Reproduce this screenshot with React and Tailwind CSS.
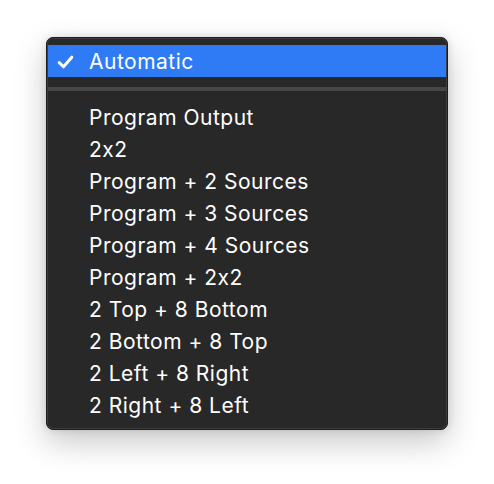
import React from 'react';

const layouts = [
  'Program Output',
  '2x2',
  'Program + 2 Sources',
  'Program + 3 Sources',
  'Program + 4 Sources',
  'Program + 2x2',
  '2 Top + 8 Bottom',
  '2 Bottom + 8 Top',
  '2 Left + 8 Right',
  '2 Right + 8 Left',
];

const Check = () => (
  <svg width="17" height="14" viewBox="0 0 17 14" className="block">
    <path d="M2.2 7.6 L6.5 11.8 L14.8 2.2" fill="none" stroke="white" strokeWidth="3" strokeLinecap="round" strokeLinejoin="round" />
  </svg>
);

export default function App() {
  return (
    <div className="w-[494px] h-[484px] bg-white pt-[37px] pl-[46px]" style={{ fontFamily: 'Inter, "Noto Sans", sans-serif' }}>
      {/* MENU */}
      <div className="w-[402px] h-[393px] rounded-[7px] bg-[#282828] border border-[#1e1e1e] ring-1 ring-inset ring-[#3c3c3c] shadow-[0_12px_32px_rgba(0,0,0,0.22),0_0_8px_rgba(0,0,0,0.12)] py-[7px] px-px">
        <div className="h-8 bg-[#2f7bf5] flex items-center text-white text-[21px] tracking-[0.5px] pt-[2px]">
          <div className="w-[41px] pl-[9px]"><Check /></div>
          <span>Automatic</span>
        </div>

        {/* separator */}
        <div className="h-6 flex items-center">
          <div className="w-full h-1 bg-[#464646]" />
        </div>

        {layouts.map((label) => (
          <div key={label} className="h-8 flex items-center pl-[41px] pt-[2px] text-white text-[21px] tracking-[0.5px]">
            {label}
          </div>
        ))}
      </div>
    </div>
  );
}
